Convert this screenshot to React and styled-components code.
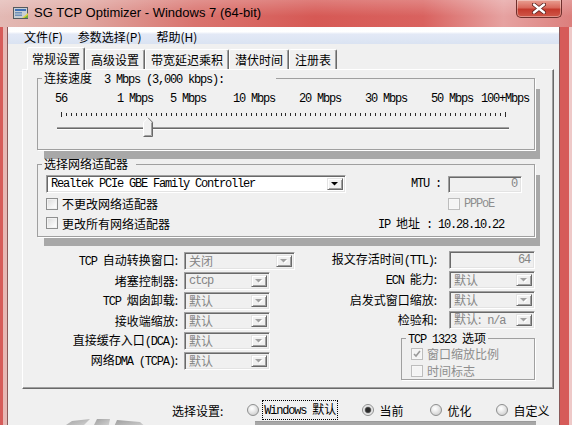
import React from 'react';
import styled, { createGlobalStyle } from 'styled-components';

const CJK = '"Noto Sans CJK SC", "Noto Sans", sans-serif';
const MONO = '"Liberation Mono", "Noto Sans CJK SC", monospace';

const GlobalStyle = createGlobalStyle`
  * { box-sizing: border-box; }
  html, body { margin: 0; padding: 0; }
  body {
    width: 572px;
    height: 425px;
    overflow: hidden;
    background: #eec9c8;
    font-family: ${CJK};
    font-size: 12px;
    color: #000;
  }
`;

const Window = styled.div`
  width: 572px;
  height: 425px;
  overflow: hidden;
  display: grid;
  grid-template-columns: 8px 551px 13px;
  grid-template-rows: 27px 398px;
  background: linear-gradient(
    90deg,
    #d65b59 0 3px,
    #e7b7b4 3px 7px,
    #8a5a5a 7px 8px,
    transparent 8px 559px,
    #8a5a5a 559px 560px,
    #d65b59 560px 569px,
    #eec9c8 569px
  ), #d65b59;
`;

const TitleBar = styled.div`
  grid-column: 1 / -1;
  display: flex;
  align-items: center;
  padding-left: 12px;
  background:
    linear-gradient(180deg, rgba(255, 255, 255, 0.22), rgba(255, 255, 255, 0) 60%),
    linear-gradient(90deg, #e3b9b4 0%, #dfa7a1 14%, #d9736e 34%, #d65955 55%, #d9625f 74%, #e6a2a1 88%, #dc7f7d 100%);
`;

const TitleIcon = styled.svg`
  flex: 0 0 auto;
  margin-right: 5px;
  margin-top: -2px;
`;

const TitleText = styled.span`
  font-family: "Liberation Sans", "Noto Sans", sans-serif;
  font-size: 13px;
  color: #000;
  margin-top: -3px;
`;

const CloseButton = styled.div`
  align-self: flex-start;
  margin-left: auto;
  margin-right: 10px;
  width: 46px;
  height: 18px;
  display: flex;
  align-items: center;
  justify-content: center;
  border: 1px solid #6e2f2c;
  border-top: none;
  border-radius: 0 0 5px 5px;
  background: linear-gradient(180deg, #e9a093 0%, #d9695c 45%, #c43a2d 55%, #d0584a 100%);
  box-shadow: inset 0 0 0 1px rgba(255, 255, 255, 0.35);
`;

const Client = styled.div`
  grid-column: 2;
  display: flex;
  flex-direction: column;
  background: #f0f0f0;
  min-height: 0;
  overflow: hidden;

  & > * {
    flex-shrink: 0;
  }
`;

const MenuBar = styled.div`
  display: flex;
  gap: 15px;
  height: 17px;
  padding: 2px 0 0 16px;
  align-items: center;
  line-height: 15px;
  background: linear-gradient(180deg, #fdfdfe 0%, #ffffff 28%, #e3e9f6 42%, #dae3f2 100%);
`;

const TabStrip = styled.div`
  position: relative;
  z-index: 1;
  display: flex;
  align-items: flex-end;
  height: 22px;
  margin-top: 3px;
  padding-left: 19px;
`;

const Tab = styled.div`
  height: ${(p) => (p.$active ? '23px' : '20px')};
  margin-bottom: ${(p) => (p.$active ? '-1px' : '0')};
  line-height: ${(p) => (p.$active ? '22px' : '19px')};
  padding: 0 ${(p) => (p.$active ? '4px' : '5px')};
  background: #f0f0f0;
  border: 1px solid;
  border-bottom: none;
  border-color: #fff #696969 transparent #fff;
  border-radius: 2px 2px 0 0;
  box-shadow: inset -1px 0 0 #a0a0a0;
  white-space: nowrap;
`;

const Panel = styled.div`
  margin-left: 14px;
  width: 532px;
  height: 320px;
  border: 1px solid;
  border-color: #fff #696969 #696969 #fff;
  box-shadow: inset -1px -1px 0 #a0a0a0;
  padding: 0 18px 0 14px;
  display: flex;
  flex-direction: column;

  & > * {
    flex-shrink: 0;
  }
`;

const Group = styled.fieldset`
  margin: ${(p) => p.$mt || 0}px 0 0;
  padding: 0;
  min-width: 0;
  border: 1px solid #a0a0a0;
  box-shadow: ${(p) =>
    p.$shadow ? '1px 1px 0 #fff, 6px 10px 0 -1px #a8a8a8' : '1px 1px 0 #fff'};
`;

const Legend = styled.legend`
  height: 14px;
  margin-left: 4px;
  padding: 0 ${(p) => p.$padRight || 2}px 0 2px;
  font-size: 12px;
  line-height: 14px;
  white-space: pre;
`;

const Lat = styled.span`
  font-family: ${MONO};
  font-size: 12px;
  letter-spacing: -1.2px;
  white-space: pre;
`;

const Scale = styled.div`
  position: relative;
  height: 13px;
  margin-top: 8px;
  font-family: ${MONO};
  font-size: 12px;
  letter-spacing: -1.2px;
  line-height: 13px;
`;

const ScaleLabel = styled.span`
  position: absolute;
  top: 0;
  transform: translateX(-50%);
  white-space: pre;
`;

const SliderSvg = styled.svg`
  display: block;
  margin: 5px 0 10px;
`;

const AdapterGrid = styled.div`
  display: grid;
  grid-template-columns: 300px 1fr;
  grid-template-rows: 18px 19px 18px;
  row-gap: 1px;
  margin-top: 4px;
  padding: 0 12px 4px 8px;
  align-items: center;
`;

const Combo = styled.div`
  display: flex;
  align-items: center;
  width: ${(p) => p.$w}px;
  height: ${(p) => p.$h || 18}px;
  padding: 0 1px;
  border: 1px solid;
  border-color: #a0a0a0 #fff #fff #a0a0a0;
  box-shadow: inset 1px 1px 0 #696969, inset -1px -1px 0 #e3e3e3;
  background: ${(p) => (p.$disabled ? '#f0f0f0' : '#fff')};
  color: ${(p) => (p.$disabled ? '#858585' : '#000')};
`;

const ComboText = styled.span`
  flex: 1;
  padding-left: 3px;
  padding-right: 3px;
  line-height: 16px;
  white-space: pre;
  text-align: ${(p) => (p.$right ? 'right' : 'left')};
  font-family: ${(p) => (p.$mono ? MONO : CJK)};
  font-size: 12px;
  letter-spacing: ${(p) => (p.$mono ? '-1.2px' : '0')};
`;

const DropButton = styled.span`
  flex: 0 0 16px;
  align-self: stretch;
  margin: 2px 1px 2px 0;
  display: flex;
  align-items: center;
  justify-content: center;
  background: #f0f0f0;
  border: 1px solid;
  border-color: #e3e3e3 #696969 #696969 #e3e3e3;
  box-shadow: inset 1px 1px 0 #fff, inset -1px -1px 0 #a0a0a0;
`;

const RightCell = styled.div`
  display: flex;
  align-items: center;
  justify-content: flex-end;
  gap: 7px;
  padding-right: ${(p) => p.$pr || 0}px;
`;

const CheckRow = styled.label`
  display: flex;
  align-items: center;
  gap: 4px;
  height: ${(p) => p.$h || 17}px;
  margin-left: ${(p) => p.$ml || 0}px;
  white-space: nowrap;
  color: ${(p) => (p.$disabled ? '#8d8d8d' : '#000')};
`;

const Box = styled.span`
  flex: 0 0 12px;
  width: 12px;
  height: 12px;
  display: flex;
  align-items: center;
  justify-content: center;
  border: 1px solid ${(p) => (p.$disabled ? '#bdbdbd' : '#8e8f8f')};
  background: ${(p) =>
    p.$disabled ? '#f4f4f4' : 'linear-gradient(135deg, #dadada 0%, #f7f7f7 70%, #fff 100%)'};
  box-shadow: inset 0 0 0 1px ${(p) => (p.$disabled ? '#f7f7f7' : '#f2f2f2')};
`;

const Settings = styled.div`
  display: flex;
  justify-content: space-between;
  margin-top: 15px;
`;

const FieldGrid = styled.div`
  display: grid;
  grid-template-columns: ${(p) => p.$cols};
  grid-template-rows: repeat(${(p) => p.$rows}, 18px) auto;
  row-gap: 2px;
  column-gap: ${(p) => p.$gap}px;
  align-items: center;
  align-content: start;
  margin-top: ${(p) => p.$mt || 0}px;
`;

const FieldLabel = styled.span`
  text-align: right;
  white-space: pre;
  line-height: 18px;
`;

const OptionGroup = styled(Group)`
  grid-column: 1 / -1;
  justify-self: end;
  align-self: start;
  width: 134px;
  margin-top: 0;
  padding-bottom: 0;
`;

const BottomRow = styled.div`
  display: flex;
  align-items: center;
  height: 18px;
  margin-top: 12px;
  padding-left: 164px;
`;

const SelectLabel = styled.span`
  margin-right: 24px;
`;

const RadioOption = styled.label`
  display: flex;
  align-items: center;
  gap: ${(p) => (p.$focus ? 3 : 5)}px;
  margin-right: ${(p) => p.$mr}px;
  white-space: nowrap;
`;

const Radio = styled.span`
  width: 12px;
  height: 12px;
  border-radius: 50%;
  border: 1px solid #8e8f8f;
  background: ${(p) =>
    p.$checked
      ? 'radial-gradient(circle at 50% 50%, #2b2b2b 0 2px, #5d5d5d 2.8px, #d8d8d8 3.6px, #f4f4f4 5px)'
      : 'radial-gradient(circle at 40% 35%, #ffffff 0, #f0f0f0 30%, #cfcfcf 80%)'};
`;

const FocusText = styled.span`
  padding: 0 1px;
  border: 1px dotted #000;
  line-height: 15px;
`;

const Footer = styled.div`
  display: flex;
  align-items: flex-start;
  height: 12px;
`;

const Logo = styled.svg`
  margin-left: 42px;
  margin-top: -4px;
  flex: 0 0 auto;
`;

const Bar = styled.div`
  margin-left: 105px;
  margin-top: 2px;
  width: 281px;
  height: 10px;
  background: #a7a7a7;
  border-top: 1px solid #9a9a9a;
`;

const Arrow = ({ disabled }) => (
  <svg width="8" height="5" viewBox="0 0 8 5">
    {disabled && <polygon points="1,1 8,1 4.5,4.5" fill="#fff" />}
    <polygon points="0,0 7,0 3.5,3.5" fill={disabled ? '#a0a0a0' : '#000'} />
  </svg>
);

const Check = () => (
  <svg width="8" height="8" viewBox="0 0 8 8">
    <path d="M1 4 L3 6 L7 1" stroke="#9a9a9a" strokeWidth="1.6" fill="none" />
  </svg>
);

const SCALE = [
  ['56', 23],
  ['1 Mbps', 97],
  ['5 Mbps', 150],
  ['10 Mbps', 216],
  ['20 Mbps', 282],
  ['30 Mbps', 348],
  ['50 Mbps', 414],
  ['100+Mbps', 467],
];

const TICKS = Array.from({ length: 90 }, (_, i) => Math.round(23 + (i * 444) / 89));

const Slider = () => (
  <SliderSvg width="494" height="28" viewBox="0 0 494 28">
    {TICKS.map((x, i) => {
      const end = i === 0 || i === TICKS.length - 1;
      return (
        <rect key={i} x={x} y={end ? 1 : 2} width="1" height={end ? 5 : 3} fill="#2a2a2a" />
      );
    })}
    <rect x="19" y="16" width="452" height="1" fill="#a0a0a0" />
    <rect x="19" y="17" width="452" height="1" fill="#696969" />
    <rect x="19" y="18" width="452" height="1" fill="#fff" />
    <polygon points="105,11 110,6 115,11 115,26 105,26" fill="#f0f0f0" />
    <polyline points="105.5,25.5 105.5,11.2 110,6.7" fill="none" stroke="#fff" />
    <polyline points="110,6.7 114.5,11.2 114.5,25.5 105.5,25.5" fill="none" stroke="#696969" />
    <polyline points="113.5,11.6 113.5,24.5 106.5,24.5" fill="none" stroke="#a0a0a0" />
  </SliderSvg>
);

const SelectBox = ({ w, text, mono, disabled, h }) => (
  <Combo $w={w} $h={h} $disabled={disabled}>
    <ComboText $mono={mono}>{text}</ComboText>
    <DropButton>
      <Arrow disabled={disabled} />
    </DropButton>
  </Combo>
);

const TextBox = ({ w, value, h }) => (
  <Combo $w={w} $h={h} $disabled>
    <ComboText $mono $right>{value}</ComboText>
  </Combo>
);

const LEFT_FIELDS = [
  [<><Lat>TCP </Lat>自动转换窗口:</>, 111, '关闭', false],
  ['堵塞控制器:', 86, 'ctcp', true],
  [<><Lat>TCP </Lat>烟囱卸载:</>, 86, '默认', false],
  ['接收端缩放:', 86, '默认', false],
  [<>直接缓存入口<Lat>(DCA)</Lat>:</>, 86, '默认', false],
  [<>网络<Lat>DMA (TCPA)</Lat>:</>, 86, '默认', false],
];

export default function App() {
  return (
    <>
      <GlobalStyle />
      <Window>
        <TitleBar>
          <TitleIcon width="17" height="16" viewBox="0 0 17 16">
            <rect x="1.5" y="2.5" width="14" height="11" fill="#c9ced3" stroke="#55595e" />
            <rect x="3" y="4" width="11" height="2" fill="#3f6fb5" />
            <rect x="3" y="7" width="7" height="1.5" fill="#6f8fb9" />
            <rect x="3" y="9.5" width="7" height="1.5" fill="#6f8fb9" />
            <polygon points="10,13 16,8 16,13" fill="#e0d13a" />
            <polygon points="12,13 16,10 16,13" fill="#6cae3c" />
          </TitleIcon>
          <TitleText>SG TCP Optimizer - Windows 7 (64-bit)</TitleText>
          <CloseButton>
            <svg width="14" height="11" viewBox="0 0 14 11">
              <path d="M2 1.5 L12 9.5 M12 1.5 L2 9.5" stroke="#5b1f1b" strokeWidth="4" strokeLinecap="round" />
              <path d="M2 1.5 L12 9.5 M12 1.5 L2 9.5" stroke="#fff" strokeWidth="2.4" strokeLinecap="round" />
            </svg>
          </CloseButton>
        </TitleBar>

        <Client>
          <MenuBar>
            <span>文件(F)</span>
            <span>参数选择(P)</span>
            <span>帮助(H)</span>
          </MenuBar>

          <TabStrip>
            <Tab $active>常规设置</Tab>
            <Tab>高级设置</Tab>
            <Tab>带宽延迟乘积</Tab>
            <Tab>潜伏时间</Tab>
            <Tab>注册表</Tab>
          </TabStrip>

          <Panel>
            <Group $shadow $mt={1}>
              <Legend $padRight={52}>
                连接速度<Lat>  3 Mbps (3,000 kbps):</Lat>
              </Legend>
              <Scale>
                {SCALE.map(([text, x]) => (
                  <ScaleLabel key={text} style={{ left: x }}>
                    {text}
                  </ScaleLabel>
                ))}
              </Scale>
              <Slider />
            </Group>

            <Group $shadow $mt={7}>
              <Legend $padRight={8}>选择网络适配器</Legend>
              <AdapterGrid>
                <SelectBox w={300} text="Realtek PCIe GBE Family Controller" mono />
                <RightCell>
                  <Lat>MTU :</Lat>
                  <TextBox w={74} h={17} value="0" />
                </RightCell>
                <CheckRow>
                  <Box />
                  不更改网络适配器
                </CheckRow>
                <RightCell>
                  <CheckRow $disabled style={{ width: 74 }}>
                    <Box $disabled />
                    <Lat>PPPoE</Lat>
                  </CheckRow>
                </RightCell>
                <CheckRow>
                  <Box />
                  更改所有网络适配器
                </CheckRow>
                <RightCell $pr={18}>
                  <span>
                    <Lat>IP </Lat>地址<Lat> : 10.28.10.22</Lat>
                  </span>
                </RightCell>
              </AdapterGrid>
            </Group>

            <Settings>
              <FieldGrid $cols="141px 111px" $gap={6} $rows={6}>
                {LEFT_FIELDS.map(([label, w, value, mono], i) => (
                  <React.Fragment key={i}>
                    <FieldLabel>{label}</FieldLabel>
                    <SelectBox w={w} text={value} mono={mono} disabled />
                  </React.Fragment>
                ))}
              </FieldGrid>

              <FieldGrid $cols="140px 86px" $gap={12} $rows={4} $mt={-1}>
                <FieldLabel>
                  报文存活时间<Lat>(TTL)</Lat>:
                </FieldLabel>
                <TextBox w={86} h={18} value="64" />
                <FieldLabel>
                  <Lat>ECN </Lat>能力:
                </FieldLabel>
                <SelectBox w={86} text="默认" disabled />
                <FieldLabel>启发式窗口缩放:</FieldLabel>
                <SelectBox w={86} text="默认" disabled />
                <FieldLabel>检验和:</FieldLabel>
                <SelectBox w={86} text={<>默认:<Lat> n/a</Lat></>} disabled />
                <OptionGroup>
                  <Legend $padRight={2}>
                    <Lat>TCP 1323 </Lat>选项
                  </Legend>
                  <CheckRow $disabled $ml={9}>
                    <Box $disabled>
                      <Check />
                    </Box>
                    窗口缩放比例
                  </CheckRow>
                  <CheckRow $disabled $ml={9}>
                    <Box $disabled />
                    时间标志
                  </CheckRow>
                </OptionGroup>
              </FieldGrid>
            </Settings>
          </Panel>

          <BottomRow>
            <SelectLabel>选择设置:</SelectLabel>
            <RadioOption $focus $mr={24}>
              <Radio />
              <FocusText>
                <Lat>Windows </Lat>默认
              </FocusText>
            </RadioOption>
            <RadioOption $mr={27}>
              <Radio $checked />
              当前
            </RadioOption>
            <RadioOption $mr={25}>
              <Radio />
              优化
            </RadioOption>
            <RadioOption $mr={0}>
              <Radio />
              自定义
            </RadioOption>
          </BottomRow>

          <Footer>
            <Logo width="100" height="14" viewBox="0 0 100 14">
              <defs>
                <linearGradient id="lg" x1="0" y1="0" x2="1" y2="1">
                  <stop offset="0" stopColor="#9c9c9c" />
                  <stop offset="1" stopColor="#dedede" />
                </linearGradient>
              </defs>
              <polygon points="10,14 22,6 40,4 30,14" fill="url(#lg)" />
              <polygon points="42,14 47,4 60,4 58,14" fill="url(#lg)" />
              <polygon points="63,14 67,5 90,7 98,14" fill="url(#lg)" />
            </Logo>
            <Bar />
          </Footer>
        </Client>
      </Window>
    </>
  );
}
